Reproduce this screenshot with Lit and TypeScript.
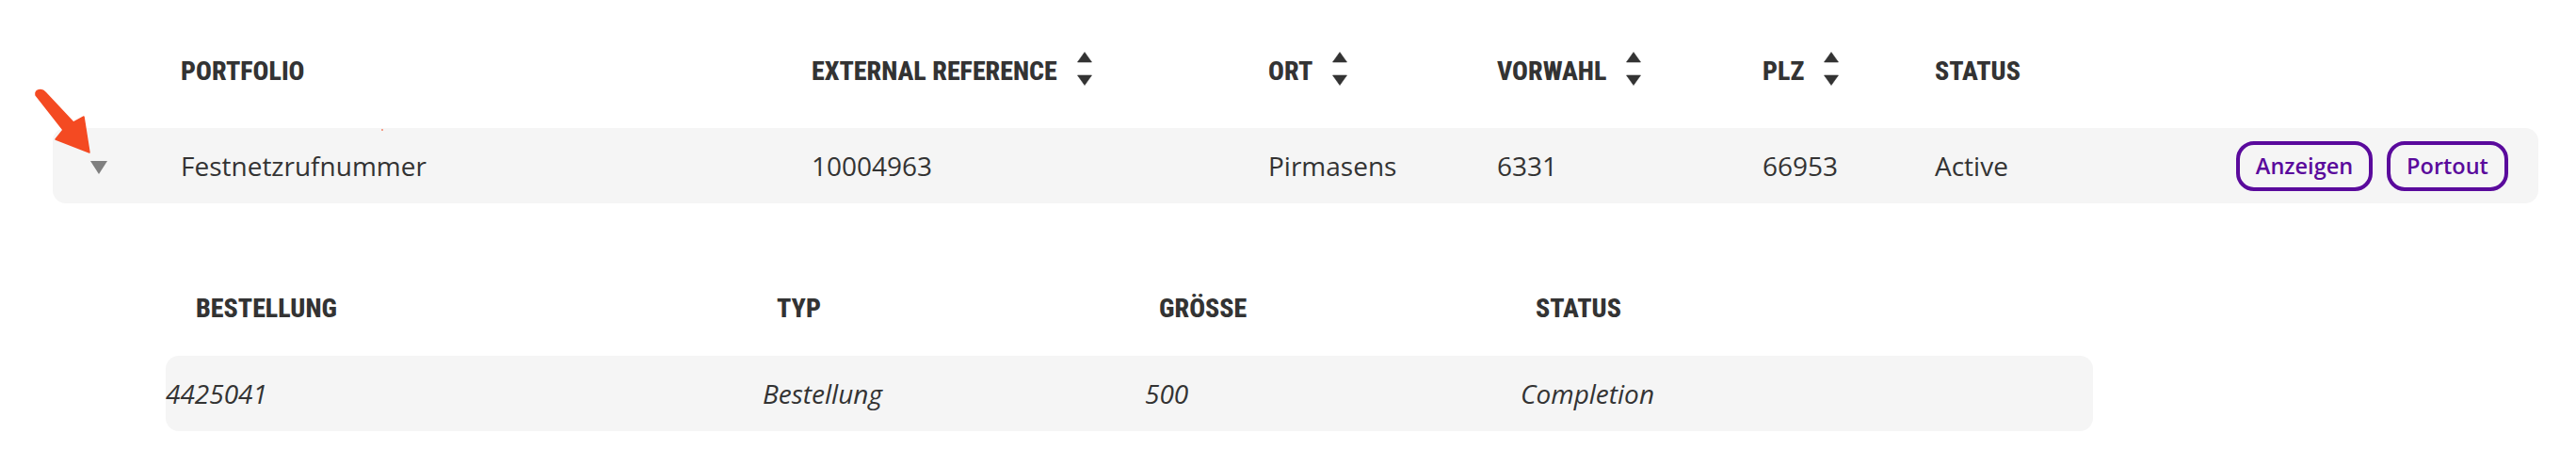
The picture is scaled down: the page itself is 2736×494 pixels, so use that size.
import { LitElement, html, css, svg } from "lit";
import { customElement } from "lit/decorators.js";

const sortIcon = html`<svg class="sort" width="16" height="36" viewBox="0 0 16 36" aria-hidden="true">
  <path d="M8 0.5 L15.5 11 H0.5 Z" fill="#333" stroke="#333" stroke-width="0.6" stroke-linejoin="round"/>
  <path d="M0.5 25 H15.5 L8 35.5 Z" fill="#333" stroke="#333" stroke-width="0.6" stroke-linejoin="round"/>
</svg>`;

const arrow = svg`<path d="M38 101 Q37 96 43 95.5 Q46 95.5 48 98 L78 130 L89 124 L95 162 L59 148 L67 138 Z" fill="#f44a22" stroke="#f44a22" stroke-width="1.5" stroke-linejoin="round"/><rect x="405" y="137.5" width="2" height="1" fill="#f44a22"/>`;

@customElement("app-root")
export class AppRoot extends LitElement {
  static styles = css`
    :host {
      display: block;
      position: relative;
      width: 2736px;
      height: 494px;
      background: #fff;
      color: #333;
      font-family: "Open Sans", sans-serif;
      overflow: hidden;
    }
    .main {
      display: grid;
      grid-template-columns: 136px 670px 485px 243px 282px 183px 200px 1fr;
      margin-left: 56px;
      width: 2640px;
    }
    .head {
      height: 136px;
      padding-top: 15px;
      box-sizing: border-box;
      align-items: center;
    }
    .th {
      display: flex;
      align-items: center;
      gap: 21px;
      font-family: "Roboto Condensed", "Liberation Sans Narrow", Roboto, sans-serif;
      font-weight: 800;
      font-size: 28px;
      font-stretch: 75%;
      line-height: 36px;
      white-space: nowrap;
    }
    .sort { flex: none; margin-top: -6px; }
    .row {
      background: #f5f5f5;
      border-radius: 14px;
      align-items: center;
      font-size: 28px;
    }
    .main.row { height: 80px; }
    .toggle { justify-self: start; margin-left: 40px; display: block; margin-top: 3px; }
    .cell { white-space: nowrap; }
    .actions {
      display: flex;
      justify-content: flex-end;
      gap: 15px;
      padding-right: 32px;
    }
    button {
      height: 53px;
      box-sizing: border-box;
      padding: 0;
      border: 4px solid #5a0a9c;
      border-radius: 19px;
      background: transparent;
      color: #5a0a9c;
      font: 600 23.5px "Open Sans", sans-serif;
    }
    .b1 { width: 145px; }
    .b2 { width: 129px; }
    .sub {
      display: grid;
      grid-template-columns: 634px 406px 399px 1fr;
      margin-left: 176px;
      width: 2047px;
    }
    .sub.head {
      height: 92px;
      margin-top: 70px;
      padding: 0 0 8px;
    }
    .sub.row { height: 80px; font-style: italic; }
    .p1 { padding-left: 32px; }
    .p2 { padding-left: 15px; }
    .p3 { padding-left: 16px; }
    .arrow { position: absolute; left: 0; top: 0; pointer-events: none; }
  `;

  render() {
    return html`
      <div class="main head">
        <span></span>
        <div class="th">PORTFOLIO</div>
        <div class="th">EXTERNAL REFERENCE ${sortIcon}</div>
        <div class="th">ORT ${sortIcon}</div>
        <div class="th">VORWAHL ${sortIcon}</div>
        <div class="th">PLZ ${sortIcon}</div>
        <div class="th">STATUS</div>
      </div>
      <div class="main row">
        <svg class="toggle" width="18" height="14" viewBox="0 0 18 14" aria-hidden="true"><path d="M0 0 H18 L9 14 Z" fill="#808080"/></svg>
        <div class="cell">Festnetzrufnummer</div>
        <div class="cell">10004963</div>
        <div class="cell">Pirmasens</div>
        <div class="cell">6331</div>
        <div class="cell">66953</div>
        <div class="cell">Active</div>
        <div class="actions">
          <button class="b1">Anzeigen</button>
          <button class="b2">Portout</button>
        </div>
      </div>
      <div class="sub head">
        <div class="th p1">BESTELLUNG</div>
        <div class="th p2">TYP</div>
        <div class="th p2">GRÖSSE</div>
        <div class="th p3">STATUS</div>
      </div>
      <div class="sub row">
        <div class="cell">4425041</div>
        <div class="cell">Bestellung</div>
        <div class="cell">500</div>
        <div class="cell">Completion</div>
      </div>
      <svg class="arrow" width="420" height="180" viewBox="0 0 420 180" aria-hidden="true">${arrow}</svg>
    `;
  }
}
